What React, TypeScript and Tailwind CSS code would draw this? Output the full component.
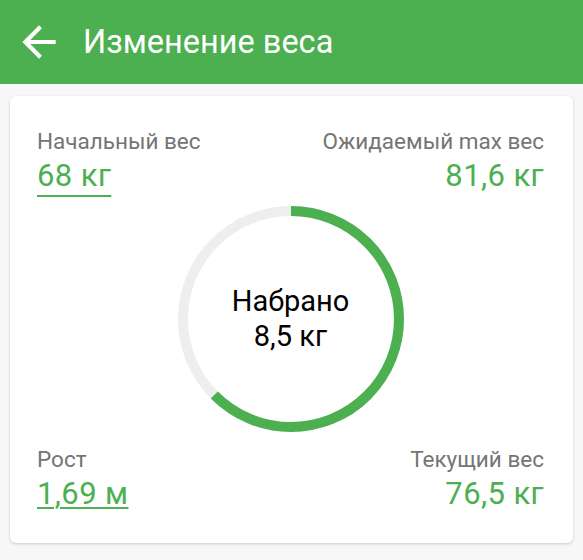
const progress = 8.5 / (81.6 - 68);

const Ring = () => {
  const r = 108;
  const c = 2 * Math.PI * r;
  return (
    <div className="relative w-[226px] h-[226px]">
      <svg width="226" height="226" viewBox="0 0 226 226" className="absolute inset-0">
        <circle cx="113" cy="113" r={r} fill="none" stroke="#eeeeee" strokeWidth="10" />
        <circle
          cx="113"
          cy="113"
          r={r}
          fill="none"
          stroke="#4caf50"
          strokeWidth="10"
          strokeDasharray={`${c * progress} ${c}`}
          transform="rotate(-90 113 113)"
        />
      </svg>
      <div className="absolute inset-0 flex flex-col items-center justify-center text-[29px] leading-[35px] text-black">
        <span>Набрано</span>
        <span>8,5 кг</span>
      </div>
    </div>
  );
};

const Stat = ({
  label,
  value,
  right,
  link,
  offset,
}: {
  label: string;
  value: string;
  right?: boolean;
  link?: boolean;
  offset?: string;
}) => (
  <div className={right ? "flex flex-col items-end" : "flex flex-col items-start"}>
    <span className="text-[22.5px] leading-[28px] text-[#757575]">{label}</span>
    <span
      className={
        "mt-[5px] text-[31px] leading-[32px] tracking-[0.4px] text-[#4caf50] " +
        (link ? "underline decoration-2 " + offset : "")
      }
    >
      {value}
    </span>
  </div>
);

export default function App() {
  return (
    <div className="w-[583px] h-[560px] bg-[#f7f7f7] font-['Roboto',sans-serif] overflow-hidden">
      <div className="h-[84px] bg-[#4caf50] flex items-center pl-[14px]">
        <svg width="50" height="50" viewBox="0 0 24 24" fill="#ffffff">
          <path d="M20 11H7.83l5.59-5.59L12 4l-8 8 8 8 1.41-1.41L7.83 13H20v-2z" />
        </svg>
        <span className="ml-[19px] text-[32.5px] text-white">Изменение веса</span>
      </div>
      <div className="mx-[10px] mt-[12px] h-[447px] bg-white rounded-[6px] shadow-[0_1px_3px_rgba(0,0,0,0.18)] pl-[27px] pr-[29px] pt-[31px] pb-[29px] flex flex-col">
        <div className="flex justify-between">
          <Stat label="Начальный вес" value="68 кг" link offset="underline-offset-[9px]" />
          <Stat label="Ожидаемый max вес" value="81,6 кг" right />
        </div>
        <div className="flex justify-center mt-[14px]">
          <Ring />
        </div>
        <div className="flex justify-between mt-[13px]">
          <Stat label="Рост" value="1,69 м" link offset="underline-offset-[3px]" />
          <Stat label="Текущий вес" value="76,5 кг" right />
        </div>
      </div>
    </div>
  );
}
